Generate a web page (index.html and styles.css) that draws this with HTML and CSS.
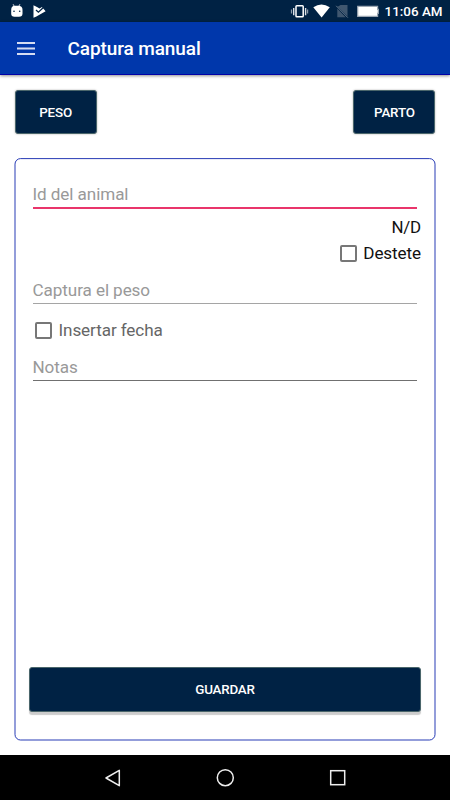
FILE: index.html
```html
<!DOCTYPE html>
<html lang="es">
<head>
<meta charset="utf-8">
<title>Captura manual</title>
<link rel="stylesheet" href="styles.css">
</head>
<body>
<div class="statusbar">
  <svg class="notifications" width="50" height="22" viewBox="0 0 50 22">
    <path d="M13 4.2l1.2 2M20 4.2l-1.2 2" stroke="#a9b4c1" stroke-width="1.2"/>
    <path d="M11.2 10Q11.2 5.8 15 5.8h3Q22.500 5.800 22.500 10v3.500Q22.500 16.700 19 16.700h-4.500Q11.200 16.700 11.200 13.500z" fill="#fff"/>
    <circle cx="14" cy="11.300" r=".8" fill="#002244"/><circle cx="19.700" cy="11.300" r=".8" fill="#002244"/>
    <path d="M33.500 5.200L37 7l2.500 1.400 2.500-1.400 3.600 4.200-9.200 5.300-2.900 1.300z" fill="#fff"/>
    <path d="M36 10l2.400 2.200 5-4.600" fill="none" stroke="#002244" stroke-width="1.300"/>
  </svg>
  <div class="system">
    <svg width="92" height="22" viewBox="290 0 92 22">
      <rect x="296" y="5.800" width="7.200" height="11" rx=".8" fill="none" stroke="#fff" stroke-width="1.500"/>
      <path d="M293.700 8v7.200M305.600 8v7.200" stroke="#dce1e6" stroke-width="1.400"/>
      <path d="M291.500 9.500v4M307.600 9.500v4" stroke="#8c9bab" stroke-width="1.200"/>
      <path d="M313.300 7.200Q321.500 1.800 329.800 7.200L321.600 17.500z" fill="#fff"/>
      <path d="M340.500 5h7v11.200l-9.800-9.500zM337.300 8.500l8.400 8.700h-8.400z" fill="#40576f"/>
      <path d="M336.200 5.800l11.600 11.800" stroke="#66788b" stroke-width="1"/>
      <path d="M357.700 6.400h19.900v3h.7v4h-.7v2.900h-19.900z" fill="#fff" stroke="#9ca7b3" stroke-width="1.200"/>
    </svg>
    <span class="clock">11:06 AM</span>
  </div>
</div>
<header class="appbar">
  <svg class="menu" width="18" height="13" viewBox="0 0 18 13"><path d="M0 1h18M0 6.500h18M0 12h18" stroke="#d5dcf2" stroke-width="1.800"/></svg>
  <h1 class="title">Captura manual</h1>
</header>
<main class="content">
  <div class="modes">
    <button class="button mode">PESO</button>
    <button class="button mode">PARTO</button>
  </div>
  <section class="card">
    <svg class="outline" width="422" height="584" viewBox="0 0 422 584"><rect x="1" y=".6" width="420" height="581.400" rx="5.500" fill="none" stroke="#0018a8" stroke-width=".85"/></svg>
    <div class="field field-id">Id del animal</div>
    <div class="status">N/D</div>
    <label class="check check-right"><span class="box"></span>Destete</label>
    <div class="field field-weight">Captura el peso</div>
    <label class="check check-date"><span class="box"></span>Insertar fecha</label>
    <div class="field field-notes">Notas</div>
    <button class="button save">GUARDAR</button>
  </section>
</main>
<nav class="navbar">
  <svg width="450" height="45" viewBox="0 0 450 45" fill="none" stroke="#eee" stroke-width="1.500">
    <path d="M119.300 15.300v15.400L106 23z" stroke-linejoin="round"/>
    <circle cx="225.300" cy="22.700" r="8"/>
    <rect x="330.700" y="15.700" width="14" height="14"/>
  </svg>
</nav>
</body>
</html>
```

FILE: styles.css
```css
* { box-sizing: border-box; }
body {
  margin: 0;
  width: 450px;
  height: 800px;
  display: flex;
  flex-direction: column;
  overflow: hidden;
  background: #fff;
  font-family: Roboto, sans-serif;
}
svg { display: block; flex: none; }
.statusbar {
  height: 22px;
  display: flex;
  justify-content: space-between;
  background: #002244;
  color: #fff;
}
.system { display: flex; padding-right: 7.500px; }
.clock {
  width: 60.500px;
  text-align: right;
  white-space: nowrap;
  font-size: 13.400px;
  font-weight: 500;
  line-height: 24px;
  letter-spacing: 0;
}
.appbar {
  height: 53px;
  display: flex;
  align-items: center;
  padding-left: 17px;
  background: #0037ab;
  border-bottom: 1px solid #0000a8;
  box-shadow: 0 1px 3px rgba(0, 0, 0, .45);
}
.title {
  margin: 2px 0 0 32.500px;
  color: #fff;
  font-size: 19px;
  font-weight: 500;
  line-height: 24px;
  letter-spacing: -.1px;
}
.content {
  flex: 1;
  display: flex;
  flex-direction: column;
  padding: 15px 14px 13px;
}
.modes { display: flex; justify-content: space-between; padding: 0 .6px; }
.button {
  height: 44px;
  padding: 0;
  border: 1px solid #4a666b;
  border-radius: 3px;
  background: #002244;
  color: #fff;
  font: 500 13.400px/43px Roboto, sans-serif;
  letter-spacing: -.2px;
}
.mode {
  width: 82px;
  box-shadow: 0 0 2px rgba(0, 0, 0, .35);
}
.card {
  position: relative;
  flex: 1;
  margin-top: 24px;
  padding: 22px 15px 30px;
  display: flex;
  flex-direction: column;
}
.outline { position: absolute; top: 0; left: 0; }
.field {
  margin: 0 4px 0 3.500px;
  padding-top: 2px;
  color: #999;
  font-size: 17.100px;
  line-height: 24px;
  letter-spacing: -.08px;
  border-bottom: 1px solid #a5a5a5;
}
.field-id { height: 29px; border-bottom: 2px solid #e9356b; }
.status { margin-top: 7px; text-align: right; font-size: 16.900px; line-height: 22px; letter-spacing: -.2px; color: #111; }
.check {
  display: flex;
  align-items: center;
  gap: 6.500px;
  font-size: 17.100px;
  line-height: 24px;
  letter-spacing: -.1px;
}
.box { width: 17px; height: 17px; border: 2px solid #777; border-radius: 2px; }
.check-right { justify-content: flex-end; margin-top: 3px; color: #111; }
.field-weight { height: 28px; margin-top: 11px; }
.check-date { margin: 14px 0 0 6px; color: #666; }
.field-notes { height: 27px; margin-top: 12px; padding-top: 1px; border-bottom-color: #707070; }
.save { height: 45px; margin-top: auto; box-shadow: 0 3px 1px #ccc; }
.navbar { height: 45px; background: #000; }
```
